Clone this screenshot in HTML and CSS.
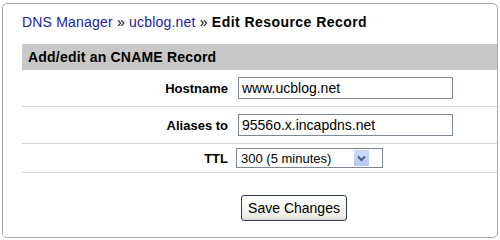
FILE: index.html
```html
<!DOCTYPE html>
<html lang="en">

<head>
    <meta charset="UTF-8">
    <title>Edit Resource Record</title>
    <link rel="stylesheet" href="styles.css">
</head>

<body>
    <div class="panel">
        <h1 class="crumbs">
            <a href="#">DNS Manager</a> &raquo; <a href="#">ucblog.net</a> &raquo; <b>Edit Resource Record</b>
        </h1>

        <h2 class="section">Add/edit an CNAME Record</h2>

        <div class="row">
            <label for="host">Hostname</label>
            <input type="text" id="host" class="input" value="www.ucblog.net">
        </div>

        <div class="row">
            <label for="alias">Aliases to</label>
            <input type="text" id="alias" class="input" value="9556o.x.incapdns.net">
        </div>

        <div class="row row-ttl">
            <label for="ttl">TTL</label>
            <span class="dropdown">
                <select id="ttl" class="select">
                    <option>300 (5 minutes)</option>
                    <option>3600 (1 hour)</option>
                    <option>86400 (1 day)</option>
                </select>
                <span class="arrow">
                    <svg width="15" height="16" viewBox="0 0 15 16">
                        <path d="M4 6.5 L7.5 10 L11 6.5" fill="none" stroke="#4d6185" stroke-width="2"/>
                    </svg>
                </span>
            </span>
        </div>

        <div class="actions">
            <button type="submit" class="submit">Save Changes</button>
        </div>
    </div>
</body>

</html>
```

FILE: styles.css
```css
html,
body {
    height: 100%;
}

body {
    margin: 0;
    padding: 3px 2px;
    background: #FFF;
    font-family: "Liberation Sans", Arial, sans-serif;
    color: #000;
}

.panel {
    width: 496px;
    height: 235px;
    box-sizing: border-box;
    border: 1px solid #aaa;
    border-radius: 5px;
    padding: 10px 0 0 19px;
}

.crumbs {
    margin: 0 0 14px 0;
    font-size: 14px;
    font-weight: normal;
    line-height: 16px;
    letter-spacing: 0.2px;
}

.crumbs a {
    color: #1c1ca0;
    text-decoration: none;
}

.crumbs b {
    letter-spacing: 0.45px;
}

.section {
    margin: 0;
    height: 26px;
    line-height: 26px;
    padding-left: 6px;
    background: #c8c8c8;
    font-size: 14px;
    letter-spacing: 0.2px;
}

.row {
    display: grid;
    grid-template-columns: 206px 1fr;
    column-gap: 10px;
    align-items: center;
    padding: 7px 0;
    border-bottom: 1px solid #d6d6d6;
}

.row label {
    text-align: right;
    font-size: 13px;
    font-weight: bold;
}

.input {
    width: 215px;
    height: 22px;
    box-sizing: border-box;
    margin: 0;
    padding: 0 0 0 3px;
    border: 1px solid #7b8794;
    font-family: "Liberation Sans", Arial, sans-serif;
    font-size: 14px;
}

.row-ttl {
    padding: 4px 0;
}

.dropdown {
    position: relative;
    width: 147px;
    height: 20px;
    margin-left: -2px;
}

.select {
    -webkit-appearance: none;
    appearance: none;
    width: 147px;
    height: 20px;
    margin: 0;
    padding: 0 0 0 4px;
    border: 1px solid #7b8794;
    border-radius: 0;
    background: #FFF;
    font-family: "Liberation Sans", Arial, sans-serif;
    font-size: 13px;
    color: #000;
}

.arrow {
    position: absolute;
    top: 2px;
    left: 118px;
    width: 15px;
    height: 16px;
    background: linear-gradient(#cddcfc, #b4c8f4);
    pointer-events: none;
}

.arrow svg {
    display: block;
}

.actions {
    padding: 22px 0 0 219px;
}

.submit {
    width: 106px;
    height: 26px;
    margin: 0;
    border: 1px solid #2f3e4f;
    border-radius: 3px;
    background: linear-gradient(#FFF, #f0f0ea 80%, #dcdcd4);
    font-family: "Liberation Sans", Arial, sans-serif;
    font-size: 14px;
    color: #000;
    padding: 0;
}
```
